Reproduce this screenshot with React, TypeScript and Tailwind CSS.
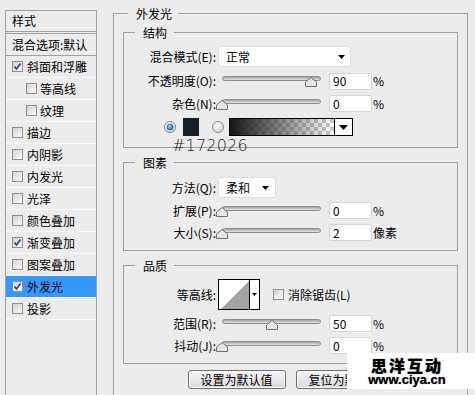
import React from "react";

const LBL = "w-[92px] shrink-0 text-right whitespace-nowrap";

function Tri({ w = 7, h = 4 }: { w?: number; h?: number }) {
  return (
    <svg width={w} height={h} viewBox={`0 0 ${w} ${h}`} className="shrink-0">
      <polygon points={`0,0 ${w},0 ${w / 2},${h}`} fill="#000" />
    </svg>
  );
}

function Check({ checked }: { checked?: boolean }) {
  return (
    <span className="relative flex h-[11px] w-[11px] shrink-0 items-center justify-center border border-[#8f8f8f] bg-linear-to-br from-[#d2d2d2] to-[#fbfbfb]">
      {checked && (
        <svg width="9" height="9" viewBox="0 0 9 9" className="absolute left-[0px] top-[0px]">
          <path d="M1.5 4.5 L3.5 7 L7.5 1.5" stroke="#2c3c96" strokeWidth="1.6" fill="none" />
        </svg>
      )}
    </span>
  );
}

function Radio({ on }: { on?: boolean }) {
  return (
    <svg width="12" height="12" viewBox="0 0 12 12" className="shrink-0">
      <defs>
        <radialGradient id="rg1" cx="0.4" cy="0.35" r="0.7">
          <stop offset="0" stopColor="#ffffff" />
          <stop offset="1" stopColor="#cfcfcf" />
        </radialGradient>
        <radialGradient id="rg2" cx="0.4" cy="0.35" r="0.7">
          <stop offset="0" stopColor="#8fd3ff" />
          <stop offset="1" stopColor="#1466b0" />
        </radialGradient>
      </defs>
      <circle cx="6" cy="6" r="5.5" fill="url(#rg1)" stroke="#8a8a8a" />
      {on && <circle cx="6" cy="6" r="3" fill="url(#rg2)" stroke="#1a4f86" strokeWidth="0.6" />}
    </svg>
  );
}

function Slider({ pct }: { pct: number }) {
  const left = Math.round(4 + pct * 99 - 6);
  return (
    <div className="relative h-full w-[111px] shrink-0">
      <div className="ml-[4px] mt-[4px] h-[5px] w-[99px] rounded-full border border-[#8d8d8d] bg-linear-to-b from-[#a4a4a4] to-[#e4e4e4]" />
      <svg className="absolute top-[5px]" style={{ left }} width="12" height="10" viewBox="0 0 12 10">
        <path d="M6 0.5 L11.5 5 V9.5 H0.5 V5 Z" fill="#e6e6e6" stroke="#6e6e6e" />
      </svg>
    </div>
  );
}

function Input({ v }: { v: string }) {
  return (
    <div className="flex h-[17px] w-[43px] shrink-0 items-center rounded-[2px] border border-[#d6d6d6] bg-white pl-[3px] leading-[14px]">
      {v}
    </div>
  );
}

function SliderRow({ label, pct, v, unit, h }: { label: string; pct: number; v: string; unit: string; h: string }) {
  return (
    <div className={`flex items-center ${h}`}>
      <span className={LBL}>{label}</span>
      <div className="ml-[2px] flex h-full items-center">
        <Slider pct={pct} />
        <Input v={v} />
        <span className="ml-[1px]">{unit}</span>
      </div>
    </div>
  );
}

function ListRow({ text, checked, indent, active }: { text: string; checked?: boolean; indent?: boolean; active?: boolean }) {
  return (
    <div
      className={`flex h-[22px] items-center border-b border-[#fcfcfc] ${indent ? "pl-[20px] gap-[3px]" : "pl-[6px] gap-[4px]"} ${
        active ? "bg-[#3399ff]" : ""
      }`}
    >
      <Check checked={checked} />
      <span className="leading-[14px]">{text}</span>
    </div>
  );
}

function Btn({ children }: { children: React.ReactNode }) {
  return (
    <div className="flex h-[19px] w-[98px] items-center justify-center rounded-[3px] border border-[#707070] bg-linear-to-b from-[#f6f6f6] to-[#dadada] leading-[14px] shadow-[inset_0_0_0_1px_#fbfbfb]">
      {children}
    </div>
  );
}

export default function App() {
  return (
    <div className="relative flex h-[395px] w-[475px] overflow-hidden bg-[#ececec] font-['Noto_Sans_CJK_SC',sans-serif] text-[12px] text-black">
      {/* left list */}
      <div className="ml-[5px] mt-[10px] w-[92px] shrink-0 border-x border-t border-[#a0a0a0]">
        <div className="flex h-[23px] items-center border-b-[3px] border-double border-[#a0a0a0] pl-[6px] leading-[14px]">样式</div>
        <div className="flex h-[22px] items-center border-b border-[#a0a0a0] pl-[6px] leading-[14px] whitespace-nowrap">混合选项:默认</div>
        <ListRow text="斜面和浮雕" checked />
        <ListRow text="等高线" indent />
        <ListRow text="纹理" indent />
        <ListRow text="描边" />
        <ListRow text="内阴影" />
        <ListRow text="内发光" />
        <ListRow text="光泽" />
        <ListRow text="颜色叠加" />
        <ListRow text="渐变叠加" checked />
        <ListRow text="图案叠加" />
        <ListRow text="外发光" checked active />
        <ListRow text="投影" />
      </div>

      {/* right */}
      <fieldset className="ml-[16px] mt-[5px] w-[355px] shrink-0 self-start border border-[#a0a0a0] px-[9px] pb-[12px]">
        <legend className="ml-[5px] pl-[8px] pr-[6px] leading-[17px]">外发光</legend>

        <fieldset className="mt-[2px] border border-[#a0a0a0] pb-[11px] pt-[5px]">
          <legend className="ml-[11px] pl-[8px] pr-[7px] leading-[17px]">结构</legend>
          <div className="flex h-[21px] items-center">
            <span className={LBL}>混合模式(E):</span>
            <div className="ml-[2px] flex h-[21px] w-[133px] items-center justify-between rounded-[2px] border border-[#dedede] bg-white pl-[7px] pr-[5px]">
              <span className="leading-[14px]">正常</span>
              <Tri />
            </div>
          </div>
          <div className="mt-[5px]">
            <SliderRow label="不透明度(O):" pct={0.9} v="90" unit="%" h="h-[18px]" />
          </div>
          <div className="mt-[5px]">
            <SliderRow label="杂色(N):" pct={0} v="0" unit="%" h="h-[17px]" />
          </div>
          <div className="relative mt-[6px] flex h-[18px] items-center pl-[40px]">
            <Radio on />
            <div className="ml-[7px] h-[18px] w-[16px] shrink-0 bg-[#172026]" />
            <div className="ml-[13px]">
              <Radio />
            </div>
            <div className="ml-[5px] flex h-[18px] w-[124px] shrink-0 border border-black">
              <div className="h-full flex-1 bg-[conic-gradient(#c9c9c9_25%,#ffffff_0_50%,#c9c9c9_0_75%,#ffffff_0)] bg-[length:8px_8px]">
                <div className="h-full w-full bg-linear-to-r from-[#151515] via-[#3a3a3a]/60 to-transparent" />
              </div>
              <div className="flex h-full w-[18px] items-center justify-center border-l border-black bg-white">
                <Tri w={9} h={5} />
              </div>
            </div>
            <span className="absolute left-[48px] top-[19px] font-['DejaVu_Sans',sans-serif] text-[16px] font-light leading-[17px] tracking-[0.2px] text-[#1e1e1e]">
              #172026
            </span>
          </div>
        </fieldset>

        <fieldset className="mt-[6px] border border-[#a0a0a0] pb-[9px] pt-[6px]">
          <legend className="ml-[11px] pl-[8px] pr-[7px] leading-[17px]">图素</legend>
          <div className="flex h-[21px] items-center">
            <span className={LBL}>方法(Q):</span>
            <div className="ml-[2px] flex h-[21px] w-[58px] items-center justify-between rounded-[2px] border border-[#dedede] bg-white pl-[7px] pr-[6px]">
              <span className="leading-[14px]">柔和</span>
              <Tri />
            </div>
          </div>
          <div className="mt-[4px]">
            <SliderRow label="扩展(P):" pct={0} v="0" unit="%" h="h-[17px]" />
          </div>
          <div className="mt-[5px]">
            <SliderRow label="大小(S):" pct={0} v="2" unit="像素" h="h-[17px]" />
          </div>
        </fieldset>

        <fieldset className="mt-[6px] border border-[#a0a0a0] pb-[9px] pt-[5px]">
          <legend className="ml-[11px] pl-[8px] pr-[7px] leading-[17px]">品质</legend>
          <div className="flex h-[31px] items-center">
            <span className={LBL}>等高线:</span>
            <div className="ml-[2px] flex h-[31px] w-[42px] shrink-0 border border-black bg-white">
              <div className="h-full w-[31px] border-r border-black">
                <svg width="30" height="29" viewBox="0 0 30 29">
                  <polygon points="2,29 30,1 30,29" fill="#a3a3a3" />
                </svg>
              </div>
              <div className="flex flex-1 items-center justify-center">
                <Tri w={5} h={3} />
              </div>
            </div>
            <div className="ml-[13px]">
              <Check />
            </div>
            <span className="ml-[4px] leading-[14px]">消除锯齿(L)</span>
          </div>
          <div className="mt-[5px]">
            <SliderRow label="范围(R):" pct={0.5} v="50" unit="%" h="h-[17px]" />
          </div>
          <div className="mt-[5px]">
            <SliderRow label="抖动(J):" pct={0} v="0" unit="%" h="h-[17px]" />
          </div>
        </fieldset>

        <div className="mt-[6px] flex justify-center gap-[10px]">
          <Btn>设置为默认值</Btn>
          <Btn>复位为默认值</Btn>
        </div>
      </fieldset>

      {/* watermark */}
      <div className="absolute right-0 top-[353px] flex h-[36px] w-[128px] flex-col items-center bg-white pr-[8px] pt-[4px]">
        <span className="text-[16px] font-black leading-[17px] tracking-[2px] [text-shadow:0_0_1px_#555]">思洋互动</span>
        <span className="font-['Liberation_Sans',sans-serif] text-[13px] font-bold leading-[11px] [text-shadow:0_0_1px_#555]">
          www.ciya.cn
        </span>
      </div>
    </div>
  );
}
